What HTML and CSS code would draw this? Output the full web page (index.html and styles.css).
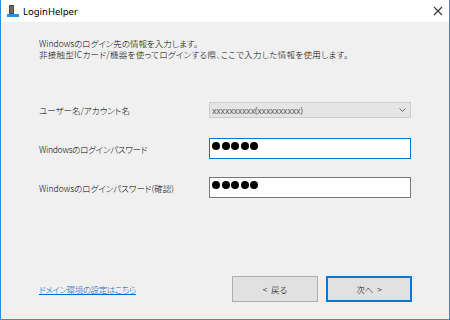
FILE: index.html
```html
<!DOCTYPE html>
<html lang="ja">
<head>
<meta charset="utf-8">
<title>LoginHelper</title>
<link rel="stylesheet" href="styles.css">
</head>
<body>
<div class="window">
  <div class="titlebar">
    <svg class="app-icon" width="14" height="14" viewBox="0 0 14 14">
      <rect x="3" y="1" width="5" height="9" fill="#4a4a4a"/>
      <rect x="4" y="2" width="3" height="7" fill="#6a6a6a"/>
      <rect x="1" y="10" width="12" height="3" fill="#2f8fdc"/>
    </svg>
    <span class="title">LoginHelper</span>
    <svg class="close" width="10" height="10" viewBox="0 0 10 10">
      <path d="M1 1 L9 9 M9 1 L1 9" stroke="#333" stroke-width="1.1"/>
    </svg>
  </div>
  <div class="content">
    <p class="intro"><span class="line1">Windowsのログイン先の情報を入力します。</span><br><span class="line2">非接触型ICカード/機器を使ってログインする際、ここで入力した情報を使用します。</span></p>
    <div class="form">
      <label class="label label-user row1">ユーザー名/アカウント名</label>
      <div class="combo row1"><span class="combo-text">xxxxxxxxxx(xxxxxxxxxx)</span>
        <svg class="chev" width="7" height="4" viewBox="0 0 7 4"><path d="M0.5 0.5 L3.5 3.3 L6.5 0.5" fill="none" stroke="#666" stroke-width="1"/></svg>
      </div>
      <label class="label label-pw row2">Windowsのログインパスワード</label>
      <div class="pw pw-focus row2"><i></i><i></i><i></i><i></i><i></i></div>
      <label class="label label-pw2 row3">Windowsのログインパスワード(確認)</label>
      <div class="pw row3"><i></i><i></i><i></i><i></i><i></i></div>
    </div>
    <div class="footer">
      <a class="link" href="#">ドメイン環境の設定はこちら</a>
      <div class="buttons">
        <button class="btn">&lt;&nbsp;&nbsp;戻る</button>
        <button class="btn btn-default">次へ&nbsp;&nbsp;&gt;</button>
      </div>
    </div>
  </div>
</div>
</body>
</html>
```
FILE: styles.css
```css
html, body {
  margin: 0;
  padding: 0;
  background: #f0f0f0;
}
.window {
  width: 450px;
  height: 320px;
  box-sizing: border-box;
  border-left: 1px solid #2b8fdd;
  border-right: 1px solid #2b8fdd;
  border-bottom: 1px solid #2b8fdd;
  display: flex;
  flex-direction: column;
  font-family: "Noto Sans CJK JP", "Noto Sans", sans-serif;
  font-feature-settings: "palt" 1;
  font-weight: 300;
  color: #000;
}
.titlebar {
  height: 22px;
  background: #fff;
  display: flex;
  align-items: center;
  padding-left: 5px;
  padding-right: 6px;
}
.app-icon {
  display: block;
}
.title {
  margin-left: 3px;
  font-family: "Noto Sans", sans-serif;
  font-weight: 400;
  font-size: 9.5px;
  color: #000;
}
.close {
  margin-left: auto;
  display: block;
}
.content {
  flex: 1;
  display: flex;
  flex-direction: column;
  padding: 16px 37px 17px 38px;
  background: #f0f0f0;
}
.intro {
  margin: 0;
  font-size: 8.5px;
  line-height: 11px;
}
.line2 {
  letter-spacing: 0.3px;
}
.form {
  display: grid;
  grid-template-columns: 170px 202px;
  margin-top: 42px;
  align-items: center;
}
.label {
  font-size: 8.5px;
  line-height: 12px;
  white-space: nowrap;
}
.label-pw {
  letter-spacing: -0.26px;
}
.label-pw2 {
  letter-spacing: 0;
}
.row1 { grid-row: 1; }
.row2 { grid-row: 2; margin-top: 20px; }
.row3 { grid-row: 3; margin-top: 18px; }
.combo {
  height: 16px;
  box-sizing: border-box;
  background: #e5e5e5;
  border: 1px solid #cccccc;
  display: flex;
  align-items: center;
  padding: 0 4px 0 2px;
}
.combo-text {
  font-family: "Noto Sans", sans-serif;
  font-weight: 400;
  font-size: 8.5px;
  color: #5a5a5a;
  letter-spacing: -0.2px;
}
.chev {
  margin-left: auto;
  display: block;
}
.pw {
  height: 21px;
  box-sizing: border-box;
  background: #fff;
  border: 1px solid #7a7a7a;
  display: flex;
  align-items: flex-start;
  padding: 3px 0 0 2px;
  gap: 1.5px;
}
.pw-focus {
  border-color: #0078d7;
}
.pw i {
  display: block;
  width: 8px;
  height: 8px;
  border-radius: 50%;
  background: #000;
}
.footer {
  margin-top: auto;
  display: flex;
  align-items: center;
  justify-content: space-between;
}
.link {
  font-size: 8.5px;
  letter-spacing: -0.4px;
  color: #0066cc;
  text-decoration: underline;
}
.buttons {
  display: flex;
  gap: 8px;
}
.btn {
  width: 86px;
  height: 26px;
  box-sizing: border-box;
  margin: 0;
  padding: 0;
  background: #e1e1e1;
  border: 1px solid #adadad;
  font-family: "Noto Sans CJK JP", sans-serif;
  font-feature-settings: "palt" 1;
  font-weight: 300;
  font-size: 8.5px;
  color: #000;
}
.btn-default {
  border: 2px solid #0078d7;
}
```
